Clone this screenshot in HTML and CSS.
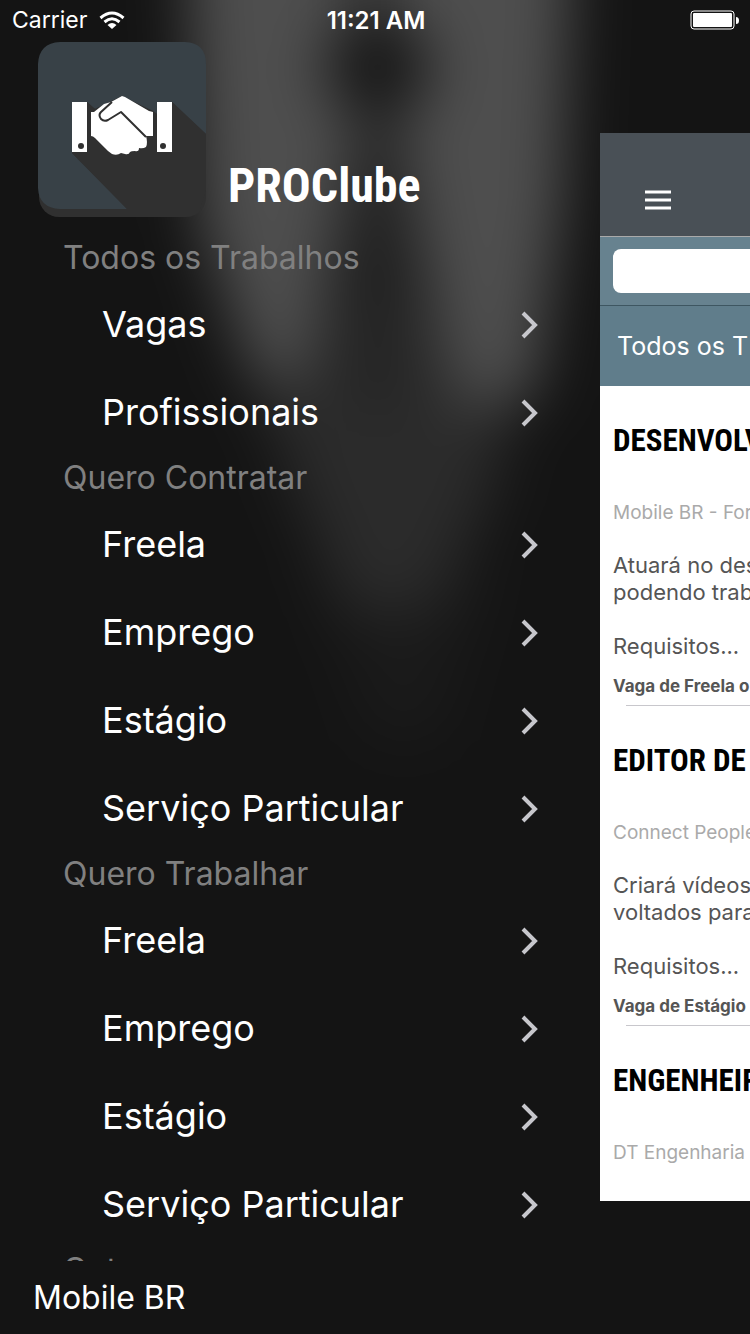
FILE: index.html
```html
<!DOCTYPE html>
<html lang="pt-BR">
<head>
<meta charset="utf-8">
<meta name="viewport" content="width=device-width, initial-scale=1">
<title>PROClube</title>
<link rel="stylesheet" href="styles.css">
</head>
<body>
<div class="app">
  <svg class="backdrop" viewBox="0 0 750 1334" preserveAspectRatio="xMidYMin slice" aria-hidden="true">
    <defs>
      <filter id="soft" filterUnits="userSpaceOnUse" x="-200" y="-200" width="1150" height="1750" color-interpolation-filters="sRGB"><feGaussianBlur stdDeviation="30" /></filter>
    </defs>
    <g filter="url(#soft)">
      <path fill="#141414" d="M-300 -300H1050V1650H-300Z" />
      <path fill="#1a1a1a" d="M310 560H490L440 740H370Z" />
      <path fill="#2b2b2b" d="M225 300H540L490 500L430 610H350L300 500Z" />
      <path fill="#4e4e4e" d="M180 -200H576L562 200L535 395L465 410L420 260L400 130H355L335 260L300 385L255 380L200 220Z" />
      <path fill="#333" d="M345 -200H395V100H345Z" />
      <ellipse cx="378" cy="68" rx="52" ry="50" fill="#161616" />
      <path fill="#242424" d="M362 100H392L410 400H345Z" />
    </g>
  </svg>

  <header class="status">
    <div class="status-left">
      <span>Carrier</span>
      <svg class="wifi" viewBox="0 0 26 19" aria-hidden="true">
        <path d="M1.500 7 Q13 -3 24.500 7" /><path d="M5.500 11 Q13 4.500 20.500 11" /><path class="dot" d="M8.500 14 Q13 10 17.500 14 L13 18 Z" />
      </svg>
    </div>
    <span class="status-time">11:21 AM</span>
    <svg class="battery" viewBox="0 0 50 20" aria-hidden="true">
      <rect class="shell" x="1" y="1" width="43" height="18" rx="3" />
      <rect class="charge" x="3" y="3" width="39" height="14" rx="1" />
      <path class="charge" d="M46 7 Q49 7 49 10.500 Q49 14 46 14 Z" />
    </svg>
  </header>

  <div class="shell-columns">
    <aside class="drawer">
      <div class="brand">
        <svg class="logo" viewBox="38 42 168 176" role="img" aria-label="PROClube">
          <rect x="39" y="50" width="167" height="167" rx="20" fill="#303030" />
          <path fill="#384147" d="M60 42H185Q206 43 206 64V134L172 102H157V114L153 111L122 96L95 109L87 102L72 153L127 209H60Q39 208 38 188V64Q39 43 60 42Z" />
          <path fill="#303030" d="M87 102L95 109L122 98L153 111L157 114L172 102L206 134V190L200 209H127L72 153Z" />
          <path fill="#fff" d="M72 102H87V152H72ZM157 102H172V152H157Z" />
          <circle cx="81" cy="146" r="3" fill="#303030" /><circle cx="163" cy="146" r="3" fill="#303030" />
          <path fill="#fff" d="M91 112H94L104 104L111 102L122 96L125 97L149 111L153 112V136H146Q148 143 146 147Q143 149 139 148Q139 152 135 151Q131 151 130 152Q129 155 125 154L121 153Q117 156 112 154L108 151L95 138Q93 136 91 136Z" />
          <path fill="none" stroke="#303030" stroke-width="2" stroke-linejoin="round" d="M112 102L101 112Q98 115 101 119Q104 122 108 120L121 112L146 137" />
        </svg>
        <h1 class="brand-name">PROClube</h1>
      </div>

      <nav class="menu" aria-label="Menu principal">
        <h2 class="menu-title">Todos os Trabalhos</h2>
        <a class="menu-item" href="#vagas">Vagas<svg class="chevron" viewBox="0 0 18 28" aria-hidden="true"><path d="M2 3L14 15L2 27" /></svg></a>
        <a class="menu-item" href="#profissionais">Profissionais<svg class="chevron" viewBox="0 0 18 28" aria-hidden="true"><path d="M2 3L14 15L2 27" /></svg></a>
        <h2 class="menu-title">Quero Contratar</h2>
        <a class="menu-item" href="#contratar-freela">Freela<svg class="chevron" viewBox="0 0 18 28" aria-hidden="true"><path d="M2 3L14 15L2 27" /></svg></a>
        <a class="menu-item" href="#contratar-emprego">Emprego<svg class="chevron" viewBox="0 0 18 28" aria-hidden="true"><path d="M2 3L14 15L2 27" /></svg></a>
        <a class="menu-item" href="#contratar-estagio">Estágio<svg class="chevron" viewBox="0 0 18 28" aria-hidden="true"><path d="M2 3L14 15L2 27" /></svg></a>
        <a class="menu-item" href="#contratar-servico">Serviço Particular<svg class="chevron" viewBox="0 0 18 28" aria-hidden="true"><path d="M2 3L14 15L2 27" /></svg></a>
        <h2 class="menu-title">Quero Trabalhar</h2>
        <a class="menu-item" href="#trabalhar-freela">Freela<svg class="chevron" viewBox="0 0 18 28" aria-hidden="true"><path d="M2 3L14 15L2 27" /></svg></a>
        <a class="menu-item" href="#trabalhar-emprego">Emprego<svg class="chevron" viewBox="0 0 18 28" aria-hidden="true"><path d="M2 3L14 15L2 27" /></svg></a>
        <a class="menu-item" href="#trabalhar-estagio">Estágio<svg class="chevron" viewBox="0 0 18 28" aria-hidden="true"><path d="M2 3L14 15L2 27" /></svg></a>
        <a class="menu-item" href="#trabalhar-servico">Serviço Particular<svg class="chevron" viewBox="0 0 18 28" aria-hidden="true"><path d="M2 3L14 15L2 27" /></svg></a>
        <h2 class="menu-title">Outros</h2>
      </nav>

      <footer class="account">Mobile BR</footer>
    </aside>

    <main class="page">
      <div class="navbar">
        <button class="menu-button" type="button" aria-label="Menu">
          <svg viewBox="0 0 28 20" aria-hidden="true"><path d="M1 2H27M1 10H27M1 18H27" /></svg>
        </button>
      </div>
      <div class="search"><input class="search-input" type="search" aria-label="Buscar"></div>
      <div class="filter">Todos os T</div>
      <article class="job">
        <h3 class="job-title">DESENVOLV</h3>
        <p class="job-company">Mobile BR - For</p>
        <p class="job-text">Atuará no des<br>podendo trab<br><br>Requisitos...</p>
        <p class="job-kind">Vaga de Freela o</p>
      </article>
      <article class="job">
        <h3 class="job-title">EDITOR DE</h3>
        <p class="job-company">Connect People</p>
        <p class="job-text">Criará vídeos<br>voltados para<br><br>Requisitos...</p>
        <p class="job-kind">Vaga de Estágio</p>
      </article>
      <article class="job">
        <h3 class="job-title">ENGENHEIR</h3>
        <p class="job-company">DT Engenharia</p>
      </article>
    </main>
  </div>
</div>
</body>
</html>
```
FILE: styles.css
```css
* {
  box-sizing: border-box;
}

body,
h1,
h2,
h3,
p {
  margin: 0;
}

body {
  background: #141414;
  color: #fff;
  font-family: Inter, "Liberation Sans", sans-serif;
}

.app {
  position: relative;
  isolation: isolate;
  height: 100vh;
  overflow: hidden;
  background: #141414;
}

/* Soft light behind the drawer */
.backdrop {
  position: absolute;
  inset: 0;
  z-index: -1;
  width: 100%;
  height: 100%;
}

/* Status bar, laid over the drawer */
.status {
  position: absolute;
  inset: 0 0 auto;
  z-index: 1;
  display: grid;
  grid-template-columns: 1fr auto 1fr;
  align-items: center;
  height: 40px;
  padding: 0 10px 0 12px;
  font-size: 23px;
}

.status-left {
  display: flex;
  align-items: center;
  gap: 12px;
}

.wifi {
  width: 26px;
  height: 19px;
  fill: none;
  stroke: #fff;
  stroke-width: 3;
}

.wifi .dot {
  fill: #fff;
  stroke: none;
}

.status-time {
  font-weight: 600;
  font-size: 24px;
}

.battery {
  justify-self: end;
  width: 50px;
  height: 20px;
}

.battery .shell {
  fill: none;
  stroke: #fff;
}

.battery .charge {
  fill: #fff;
}

.shell-columns {
  display: grid;
  grid-template-columns: 4fr 1fr;
  height: 100%;
}

/* Drawer */
.drawer {
  display: flex;
  flex-direction: column;
  min-width: 0;
  min-height: 0;
}

.brand {
  display: flex;
  flex: none;
  align-items: flex-end;
  gap: 22px;
  padding: 42px 38px 18px;
}

.logo {
  width: 168px;
  height: 176px;
}

.brand-name {
  padding-bottom: 4px;
  font: bold 48px/56px "Liberation Sans Narrow", "Roboto Condensed", sans-serif;
}

.menu {
  flex: 1;
  min-height: 0;
  overflow: hidden;
}

.menu-title {
  padding-left: 63px;
  color: #808080;
  font-size: 32px;
  font-weight: 400;
  line-height: 44px;
}

.menu-item {
  display: flex;
  align-items: center;
  justify-content: space-between;
  height: 88px;
  padding: 0 61px 0 102px;
  color: #fff;
  font-size: 36px;
  text-decoration: none;
}

.chevron {
  width: 18px;
  height: 28px;
  overflow: visible;
  fill: none;
  stroke: #c7c7cc;
  stroke-width: 4;
}

.account {
  flex: none;
  padding-left: 33px;
  font-size: 32px;
  line-height: 73px;
}

/* Current page, pushed aside by the drawer */
.page {
  min-width: 0;
  height: 80vh;
  margin-top: 10vh;
  overflow: hidden;
  background: #fff;
  color: #555;
  white-space: nowrap;
}

.navbar {
  display: flex;
  align-items: flex-end;
  height: 104px;
  padding: 0 44px 26px;
  border-bottom: 1px solid #aaa;
  background: #495056;
}

.menu-button {
  padding: 0;
  border: 0;
  background: none;
}

.menu-button svg {
  display: block;
  width: 28px;
  height: 20px;
  stroke: #fff;
  stroke-width: 3;
}

.search {
  height: 69px;
  padding: 12px 0 12px 13px;
  border-bottom: 1px solid #3e5661;
  background: #67828f;
}

.search-input {
  display: block;
  width: 100%;
  height: 44px;
  padding: 0 12px;
  border: 0;
  border-radius: 8px 0 0 8px;
  background: #fff;
}

.filter {
  padding-left: 17px;
  background: #607d8b;
  color: #fff;
  font-size: 25px;
  line-height: 80px;
}

.job {
  position: relative;
  height: 320px;
  padding: 35px 0 0 13px;
}

.job + .job::before {
  position: absolute;
  top: -1px;
  right: 0;
  left: 26px;
  height: 1px;
  background: #c8c7cc;
  content: "";
}

.job-title {
  color: #000;
  font: bold 31px/40px "Liberation Sans Narrow", "Roboto Condensed", sans-serif;
}

.job-company {
  margin-top: 38px;
  color: #aaa;
  font-size: 19px;
  line-height: 27px;
}

.job-text {
  margin-top: 26px;
  font-size: 22px;
  line-height: 27px;
}

.job-kind {
  margin-top: 13px;
  font: bold 17px/26px Inter, "Liberation Sans", sans-serif;
}
```
